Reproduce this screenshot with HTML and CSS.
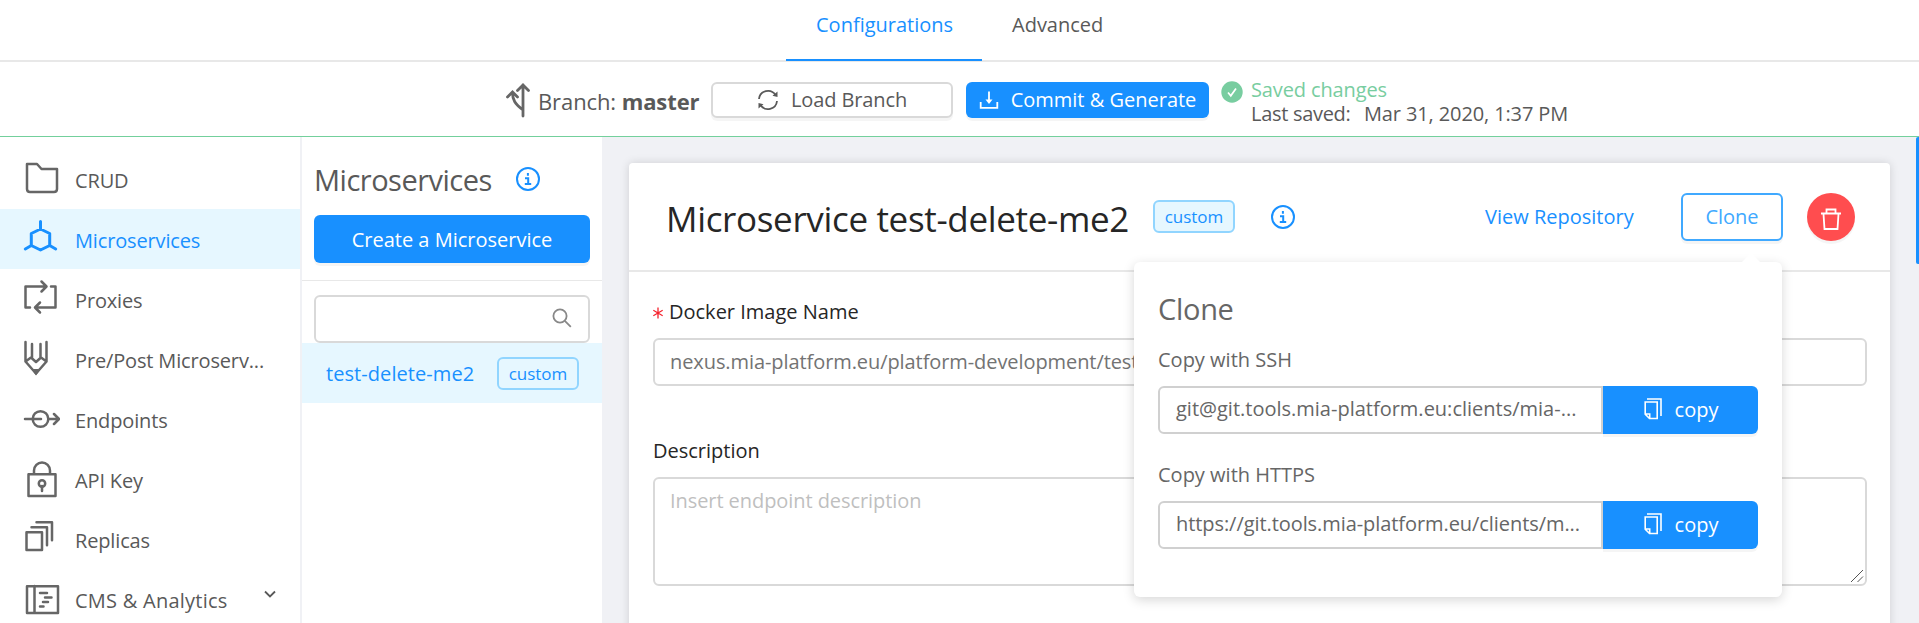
FILE: index.html
```html
<!DOCTYPE html>
<html lang="en">
<head>
<meta charset="utf-8">
<title>Microservices</title>
<link rel="stylesheet" href="styles.css">
</head>
<body>
<nav class="tabs">
  <a class="tab tab-active">Configurations</a>
  <a class="tab">Advanced</a>
</nav>
<header class="toolbar">
  <svg class="branch-icon" width="24" height="36" viewBox="0 0 24 36"><path d="M17 34V3M11.500 8.500L17 3l5.500 5.500M17 28C9 22 6.500 18 6.500 10.500M1.500 15l5-5 5 5" /></svg>
  <div class="branch-name">Branch: <b>master</b></div>
  <button class="btn btn-load">
    <svg class="sync" width="22" height="22" viewBox="0 0 22 22"><path d="M2 10A9 9 0 0 1 18.500 6M20 12A9 9 0 0 1 3.500 16"/><path class="fill" d="M20.500 2.500v5.500l-5-1.200zM1.500 19.500V14l5 1.200z"/></svg>
    <span>Load Branch</span>
  </button>
  <button class="btn btn-primary btn-commit">
    <svg class="download" width="20" height="20" viewBox="0 0 20 20"><path d="M10 1.500v10M1.700 12v5.800h16.600V12"/><path class="fill" d="M6.500 9.500h7L10 14z"/></svg>
    <span>Commit &amp; Generate</span>
  </button>
  <svg class="check" width="22" height="22" viewBox="0 0 22 22"><circle cx="11" cy="11" r="10.700"/><path d="M7 11.500l2.800 3.300L15 7.500"/></svg>
  <div class="status">
    <div class="saved">Saved changes</div>
    <div class="last"><span class="last-label">Last saved:</span><span>Mar 31, 2020, 1:37 PM</span></div>
  </div>
</header>
<div class="body">
  <aside class="sidebar">
    <a class="item"><svg class="ico" width="40" height="40" viewBox="0 0 40 40"><path d="M7 6h10l4.500 5H37v20q0 3-3 3H10q-3 0-3-3z"/></svg><span class="name">CRUD</span></a>
    <a class="item item-on"><svg class="ico thick" width="40" height="40" viewBox="0 0 40 40"><path d="M20.500 3.500v8M20.500 11l9.200 4.500v12L20.500 32l-9.200-4.500v-12zM11.300 27.500L5.300 31M29.700 27.500l6 3.500"/></svg><span class="name">Microservices</span></a>
    <a class="item"><svg class="ico" width="40" height="40" viewBox="0 0 40 40"><path d="M10 29.500H5.500v-21H26M21.500 3.500l5 5-5 5M31 8.500h4.500v21H16M20 24.500l-5 5 5 5"/></svg><span class="name">Proxies</span></a>
    <a class="item"><svg class="ico" width="40" height="40" viewBox="0 0 40 40"><path d="M5.500 4v19.500L16 35.500l10.500-12V4M12 6v14M20.500 6v14M5.500 23.500l5.500-4 5 4.500 5-4.500 5.500 4"/><path class="fill" d="M11.500 31h9l-4.500 6.500z"/></svg><span class="name">Pre/Post Microserv...</span></a>
    <a class="item"><svg class="ico" width="40" height="40" viewBox="0 0 40 40"><circle cx="20.500" cy="21" r="7.800"/><path d="M5 21h16M29 21h9.500M34 16l5 5-5 5"/></svg><span class="name">Endpoints</span></a>
    <a class="item"><svg class="ico" width="40" height="40" viewBox="0 0 40 40"><path d="M8.500 16.200h27V38h-27zM14 16v-3.500a8 8 0 0 1 16 0V16M22 28v5"/><circle cx="22" cy="25.500" r="3.200"/></svg><span class="name">API Key</span></a>
    <a class="item"><svg class="ico" width="40" height="40" viewBox="0 0 40 40"><path d="M6.500 14.200H22V32H6.500zM11.500 9.200H27v18M16.500 4.200H32v18"/></svg><span class="name">Replicas</span></a>
    <a class="item"><svg class="ico" width="40" height="40" viewBox="0 0 40 40"><path d="M7 8.200h31V35H7zM14.500 8v27M20 15h7M25 19.500h6.500M23 24h5M20 28.500h3.500"/></svg><span class="name name-wide">CMS &amp; Analytics</span><svg class="chev" width="12" height="8" viewBox="0 0 12 8"><path d="M1 1.500l5 5 5-5"/></svg></a>
  </aside>
  <section class="list">
    <div class="list-head">
      <h2>Microservices</h2>
      <svg class="info" width="24" height="24" viewBox="0 0 24 24"><circle cx="12" cy="12" r="11"/><path d="M11.900 6v2.700M9 11.200h3.200v5.600M8.800 17h6.400"/></svg>
    </div>
    <button class="btn btn-primary btn-create">Create a Microservice</button>
    <div class="search"><div class="search-box"><svg width="20" height="20" viewBox="0 0 20 20"><circle cx="8" cy="8" r="6.600"/><path d="M12.800 12.800l6 6"/></svg></div></div>
    <a class="service"><span class="service-name">test-delete-me2</span><span class="tag">custom</span></a>
  </section>
  <main class="content">
    <div class="card">
      <div class="card-head">
        <h1>Microservice test-delete-me2</h1>
        <span class="tag tag-fill">custom</span>
        <svg class="info" width="24" height="24" viewBox="0 0 24 24"><circle cx="12" cy="12" r="11"/><path d="M11.900 6v2.700M9 11.200h3.200v5.600M8.800 17h6.400"/></svg>
        <a class="repo">View Repository</a>
        <div class="clone-wrap">
          <button class="btn btn-clone">Clone</button>
          <div class="popover">
            <h3>Clone</h3>
            <div class="pop-label">Copy with SSH</div>
            <div class="copy-row"><div class="copy-text">git@git.tools.mia-platform.eu:clients/mia-...</div><button class="btn btn-primary btn-copy"><svg width="20" height="24" viewBox="0 0 20 24"><path d="M4 2h14v17M2.200 5h12v16.500H6.500l-4.300-4.300zM2.200 17h4.500v4.500"/></svg><span>copy</span></button></div>
            <div class="pop-label pop-label-2">Copy with HTTPS</div>
            <div class="copy-row"><div class="copy-text copy-https">https://git.tools.mia-platform.eu/clients/m...</div><button class="btn btn-primary btn-copy"><svg width="20" height="24" viewBox="0 0 20 24"><path d="M4 2h14v17M2.200 5h12v16.500H6.500l-4.300-4.300zM2.200 17h4.500v4.500"/></svg><span>copy</span></button></div>
          </div>
        </div>
        <button class="trash"><svg width="22" height="24" viewBox="0 0 22 24"><path d="M1 6.500h20M6.500 6V2.500h9V6M3.500 7l1 15h13l1-15"/></svg></button>
      </div>
      <div class="form">
        <div class="label"><svg class="star" width="10" height="12" viewBox="0 0 10 12"><path d="M5 .5v11M.3 3.200l9.400 5.600M9.700 3.200L.3 8.800"/></svg>Docker Image Name</div>
        <div class="field">nexus.mia-platform.eu/platform-development/test</div>
        <div class="label label-2">Description</div>
        <div class="area"><span>Insert endpoint description</span><svg width="14" height="14" viewBox="0 0 14 14"><path d="M1 13L13 1M7.500 13L13 7.500"/></svg></div>
      </div>
    </div>
    <div class="scrollbar"></div>
  </main>
</div>
</body>
</html>
```
FILE: styles.css
```css
* { box-sizing: border-box; }
body {
  margin: 0;
  height: 623px;
  overflow: hidden;
  display: flex;
  flex-direction: column;
  background: #fff;
  color: #595959;
  font: 20px/30px "Open Sans", "Noto Sans", sans-serif;
  white-space: nowrap;
}
h1, h2, h3 { margin: 0; font-weight: 400; }
svg { flex: none; fill: none; stroke: currentColor; }
svg .fill { fill: currentColor; stroke: none; }
.btn {
  flex: none;
  display: flex;
  align-items: center;
  justify-content: center;
  padding: 0;
  border: 0;
  border-radius: 6px;
  font: inherit;
  color: #595959;
  box-shadow: 0 3px 0 rgba(0, 0, 0, .04);
}
.btn-primary { background: #1890ff; color: #fff; }

.tabs { flex: none; display: flex; height: 62px; padding-left: 786px; border-bottom: 2px solid #e8e8e8; }
.tab { height: 61px; padding: 10px 30px 0; }
.tab-active { width: 196px; color: #1890ff; border-bottom: 2px solid #1890ff; }

.toolbar { flex: none; display: flex; height: 75px; padding: 20px 0 0 506px; border-bottom: 1px solid #73d09c; }
.branch-icon { stroke-width: 2.800; stroke-linecap: round; color: #666; }
.branch-name { width: 173px; margin-left: 8px; padding-top: 4px; font-size: 22px; letter-spacing: -.1px; }
.btn-load { width: 242px; height: 36px; border: 2px solid #d9d9d9; background: #fff; gap: 12px; letter-spacing: -.1px; }
.sync { stroke-width: 1.800; }
.btn-commit { width: 243px; height: 36px; margin-left: 13px; gap: 12px; }
.download { stroke-width: 1.800; }
.check { margin: -1px 0 0 12px; }
.check circle { fill: #78cda0; stroke: none; }
.check path { stroke: #fff; stroke-width: 1.700; }
.status { margin: -4px 0 0 8px; line-height: 24px; letter-spacing: -.12px; }
.saved { color: #78cda0; }
.last { display: flex; }
.last-label { width: 113px; letter-spacing: -.3px; }

.body { flex: 1; display: flex; min-height: 0; overflow: hidden; }
.sidebar { flex: none; width: 302px; height: 486px; overflow: hidden; padding-top: 12px; border-right: 2px solid #f0f1f5; }
.item { display: flex; height: 60px; padding: 9px 0 0 20px; line-height: 46px; letter-spacing: -.15px; }
.name { margin-left: 15px; }
.name-wide { letter-spacing: .25px; }
.ico { color: #666; stroke-width: 2.500; stroke-linecap: round; stroke-linejoin: round; }
.item-on { background: #e6f7ff; color: #1890ff; }
.item-on .ico { color: #1890ff; }
.thick { stroke-width: 3; }
.chev { margin: 12px 24px 0 auto; stroke-width: 1.800; }

.list { flex: none; width: 300px; }
.list-head { display: flex; height: 78px; padding: 21px 0 0 12px; }
h2 { width: 202px; font-size: 29px; line-height: 44px; letter-spacing: -.5px; }
.info { color: #1890ff; stroke-width: 2; }
.list .info { margin-top: 9px; }
.btn-create { width: 276px; height: 48px; margin: 0 0 17px 12px; padding-top: 2px; }
.search { height: 63px; padding: 14px 12px 0; border-top: 1px solid #e8e8e8; }
.search-box { display: flex; align-items: center; justify-content: flex-end; height: 48px; padding: 0 16px 2px; border: 2px solid #d9d9d9; border-radius: 6px; color: #888; }
.search-box svg { stroke-width: 1.800; }
.service { display: flex; align-items: center; justify-content: space-between; height: 60px; padding: 0 23px 0 24px; background: #e6f7ff; color: #1890ff; }
.service-name { padding-top: 2px; letter-spacing: .07px; }
.tag { flex: none; width: 82px; height: 33px; border: 2px solid #91d5ff; border-radius: 6px; color: #1890ff; font-size: 17px; line-height: 30px; text-align: center; }
.tag-fill { background: #e6f7ff; }

.content { position: relative; flex: 1; min-width: 0; padding: 26px 29px 0 27px; overflow: hidden; background: #f0f1f5; }
.card { height: 500px; background: #fff; border-radius: 4px; box-shadow: 0 0 10px rgba(0, 0, 0, .14); }
.card-head { display: flex; height: 109px; padding: 30px 35px 0 37px; border-bottom: 2px solid #e8e8e8; color: #262626; }
h1 { width: 487px; padding-top: 1px; font-size: 35px; line-height: 50px; letter-spacing: -.34px; }
.card-head .tag { margin-top: 7px; }
.card-head .info { margin: 12px 0 0 36px; }
.repo { width: 196px; margin: 9px 0 0 190px; color: #1890ff; }
.clone-wrap { position: relative; width: 102px; }
.btn-clone { width: 102px; height: 48px; border: 2px solid #40a9ff; background: #fff; color: #40a9ff; }
.trash { display: flex; align-items: center; justify-content: center; width: 48px; height: 48px; margin-left: 24px; padding: 4px 0 0; border: 0; border-radius: 50%; background: #ff4d4f; color: #fff; box-shadow: 0 3px 0 rgba(0, 0, 0, .04); }
.trash svg { stroke-width: 1.800; }

.popover { position: absolute; z-index: 2; top: 69px; right: 1px; width: 648px; height: 335px; padding: 23px 24px 0; border-radius: 6px; background: #fff; box-shadow: 0 3px 12px rgba(0, 0, 0, .16); color: #666; }
.popover::before { content: ""; position: absolute; top: -9px; right: 22px; width: 18px; height: 9px; background: #fff; clip-path: polygon(50% 0, 100% 100%, 0 100%); }
h3 { height: 49px; font-size: 29px; line-height: 48px; letter-spacing: -.3px; }
.pop-label { height: 52px; padding-top: 11px; }
.pop-label-2 { height: 67px; padding-top: 26px; }
.copy-row { display: flex; height: 48px; }
.copy-text { width: 445px; padding: 6px 0 0 16px; border: 2px solid #d0d0d0; border-radius: 6px 0 0 6px; }
.copy-https { letter-spacing: -.07px; }
.btn-copy { width: 155px; gap: 12px; border-radius: 0 6px 6px 0; }
.btn-copy svg { margin-top: -3px; stroke-width: 1.600; }

.form { padding: 24px 23px 0 24px; color: #262626; }
.label { display: flex; align-items: flex-start; height: 42px; line-height: 32px; }
.star { margin: 11px 6px 0 0; color: #f5222d; stroke-width: 1.300; }
.field { height: 48px; padding: 7px 15px; border: 2px solid #d9d9d9; border-radius: 6px; color: #737373; letter-spacing: -.08px; }
.label-2 { height: 91px; padding-top: 49px; }
.area { display: flex; justify-content: space-between; height: 109px; padding: 7px 1px 1px 15px; border: 2px solid #d9d9d9; border-radius: 6px; color: #bfbfbf; letter-spacing: -.07px; }
.area svg { align-self: flex-end; color: #555; stroke-width: 1; }
.scrollbar { position: absolute; top: 0; right: 0; width: 3px; height: 127px; border-radius: 2px 0 0 2px; background: #1890ff; }
```
